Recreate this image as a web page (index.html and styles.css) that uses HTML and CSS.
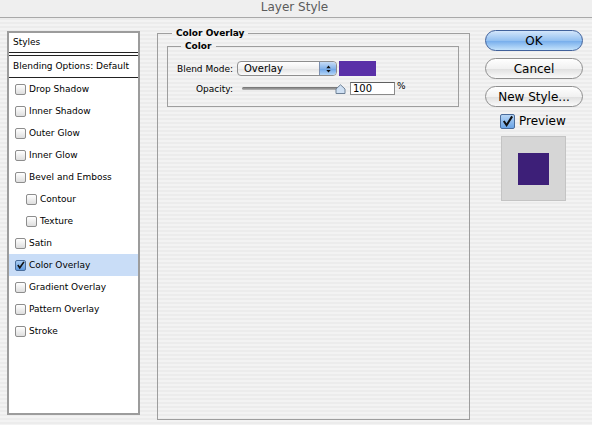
FILE: index.html
```html
<!DOCTYPE html>
<html lang="en">
<head>
    <meta charset="UTF-8">
    <title>Layer Style</title>
    <link rel="stylesheet" href="styles.css">
</head>
<body>
    <div class="window">
        <div class="titlebar">Layer Style</div>

        <div class="main">
            <div class="styles">
                <div class="styles-head">Styles</div>
                <div class="styles-blend">Blending Options: Default</div>
                <ul class="effects">
                    <li><span class="box"></span>Drop Shadow</li>
                    <li><span class="box"></span>Inner Shadow</li>
                    <li><span class="box"></span>Outer Glow</li>
                    <li><span class="box"></span>Inner Glow</li>
                    <li><span class="box"></span>Bevel and Emboss</li>
                    <li class="sub"><span class="box"></span>Contour</li>
                    <li class="sub"><span class="box"></span>Texture</li>
                    <li><span class="box"></span>Satin</li>
                    <li class="active"><span class="box checked"><svg viewBox="0 0 10 10"><path d="M2 4.5 L4.2 7.5 L8.8 1" fill="none" stroke="#111" stroke-width="1.8"/></svg></span>Color Overlay</li>
                    <li><span class="box"></span>Gradient Overlay</li>
                    <li><span class="box"></span>Pattern Overlay</li>
                    <li><span class="box"></span>Stroke</li>
                </ul>
            </div>

            <fieldset class="panel">
                <legend>Color Overlay</legend>
                <fieldset class="group">
                    <legend>Color</legend>
                    <div class="row">
                        <label>Blend Mode:</label>
                        <div class="select">
                            <span>Overlay</span>
                            <span class="arrows"><svg viewBox="0 0 8 10"><path d="M4 1 L6.5 4 L1.5 4 Z M4 9 L6.5 6 L1.5 6 Z" fill="#111"/></svg></span>
                        </div>
                        <span class="swatch"></span>
                    </div>
                    <div class="row">
                        <label>Opacity:</label>
                        <div class="slider">
                            <span class="track"></span>
                            <svg class="thumb" viewBox="0 0 11 10"><path d="M1 9.5 L1 5 L5.5 0.8 L10 5 L10 9.5 Z" fill="#cfe0f3" stroke="#6e8196"/></svg>
                        </div>
                        <span class="field">100</span>
                        <span class="unit">%</span>
                    </div>
                </fieldset>
            </fieldset>

            <div class="side">
                <button class="btn default">OK</button>
                <button class="btn">Cancel</button>
                <button class="btn">New Style...</button>
                <div class="preview-check">
                    <span class="bigbox"><svg viewBox="0 0 14 14"><path d="M3 6.5 L6 11 L12 1.5" fill="none" stroke="#111" stroke-width="2.2"/></svg></span>
                    Preview
                </div>
                <div class="preview">
                    <span class="preview-square"></span>
                </div>
            </div>
        </div>
    </div>
</body>
</html>
```

FILE: styles.css
```css
body {
    margin: 0;
    font-family: "DejaVu Sans", sans-serif;
    color: #000;
}
.window {
    width: 592px;
    height: 425px;
    overflow: hidden;
    background: repeating-linear-gradient(to bottom, #f3f3f3 0, #f3f3f3 2px, #ececec 2px, #ececec 4px);
}
.titlebar {
    height: 17px;
    line-height: 15px;
    border-bottom: 1px solid #a9a9a9;
    text-align: center;
    font-size: 12px;
    color: #5b5b5b;
    padding-right: 3px;
    background: #efefef;
}
.main {
    display: flex;
    align-items: flex-start;
    padding-left: 7px;
}

/* styles list */
.styles {
    margin-top: 13px;
    width: 133px;
    height: 384px;
    box-sizing: border-box;
    border: 2px solid #9c9c9c;
    background: #fff;
    font-size: 9px;
}
.styles-head {
    height: 19px;
    line-height: 19px;
    padding-left: 4px;
    border-bottom: 1px solid #222;
}
.styles-blend {
    margin-top: 2px;
    border-top: 1px solid #222;
    height: 21px;
    line-height: 20px;
    padding-left: 4px;
    border-bottom: 1px solid #222;
}
.effects {
    list-style: none;
    margin: 0;
    padding: 0;
}
.effects li {
    height: 22px;
    display: flex;
    align-items: center;
    padding-left: 6px;
}
.effects li.sub {
    padding-left: 17px;
}
.effects li.active {
    background: #c9ddf7;
}
.box {
    width: 9px;
    height: 9px;
    border: 1px solid #8d8d8d;
    border-radius: 2px;
    background: linear-gradient(#ffffff, #dedede);
    margin-right: 3px;
    display: flex;
}
.box.checked {
    background: linear-gradient(#a9cdf3, #5f9ae0);
    border-color: #4b6e9c;
}
.box svg {
    width: 9px;
    height: 9px;
}

/* middle panel */
.panel {
    margin: 9px 0 0 17px;
    width: 313px;
    height: 393px;
    box-sizing: border-box;
    border: 1px solid #9e9e9e;
    padding: 0 10px 0 9px;
    min-width: 0;
}
.panel legend,
.group legend {
    font-size: 9px;
    font-weight: bold;
    line-height: 13px;
    padding: 0 4px;
    margin-left: 5px;
}
.group {
    margin: 0;
    border: 1px solid #9e9e9e;
    padding: 8px 8px 11px 8px;
    min-width: 0;
}
.row {
    display: flex;
    align-items: center;
    font-size: 9px;
}
.row + .row {
    margin-top: 6px;
}
.row label {
    width: 57px;
    text-align: right;
    margin-right: 4px;
}
.select {
    width: 100px;
    height: 15px;
    box-sizing: border-box;
    border: 1px solid #8e8e8e;
    border-radius: 4px;
    background: linear-gradient(#ffffff, #f0f0f0 50%, #e2e2e2 51%, #fbfbfb);
    display: flex;
    align-items: center;
    justify-content: space-between;
    padding-left: 6px;
    font-size: 10px;
    overflow: hidden;
}
.arrows {
    width: 16px;
    height: 13px;
    border-left: 1px solid #7b8fb0;
    background: linear-gradient(#c7dcf6, #86b4ea 50%, #6aa2e6 51%, #b5d6f7);
    border-radius: 0 3px 3px 0;
    display: flex;
    align-items: center;
    justify-content: center;
}
.arrows svg {
    width: 7px;
    height: 10px;
}
.swatch {
    width: 37px;
    height: 15px;
    margin-left: 2px;
    background: #5a30a8;
}
.slider {
    position: relative;
    width: 104px;
    height: 13px;
    margin-left: 5px;
}
.track {
    position: absolute;
    left: 0;
    top: 5px;
    width: 98px;
    height: 3px;
    border-radius: 2px;
    background: linear-gradient(#6d6d6d, #b9b9b9);
}
.thumb {
    position: absolute;
    left: 93px;
    top: 2px;
    width: 11px;
    height: 10px;
}
.field {
    width: 45px;
    height: 13px;
    margin-left: 4px;
    box-sizing: border-box;
    border: 1px solid #8a8a8a;
    border-top-color: #5f5f5f;
    background: #fff;
    font-size: 10px;
    line-height: 12px;
    padding-left: 2px;
}
.unit {
    margin-left: 2px;
    font-size: 9px;
    align-self: flex-start;
    margin-top: -1px;
}

/* buttons column */
.side {
    margin: 12px 0 0 15px;
    width: 98px;
    display: flex;
    flex-direction: column;
}
.btn {
    height: 21px;
    width: 98px;
    border: 1px solid #8f8f8f;
    border-radius: 11px;
    background: linear-gradient(#ffffff, #f1f1f1 50%, #dfdfdf 51%, #fafafa);
    font-family: "DejaVu Sans", sans-serif;
    font-size: 12px;
    color: #000;
    padding: 0;
    margin-bottom: 7px;
}
.btn.default {
    border-color: #40619b;
    background: linear-gradient(#d3e6fb, #94c1f1 50%, #73abeb 51%, #c3e2fb);
}
.preview-check {
    display: flex;
    align-items: center;
    font-size: 12px;
    margin: 0 0 0 15px;
    height: 14px;
}
.bigbox {
    width: 13px;
    height: 13px;
    border: 1px solid #4a6c9b;
    border-radius: 2px;
    background: linear-gradient(#b6d5f5, #6aa4e6);
    margin-right: 4px;
    display: flex;
}
.bigbox svg {
    width: 13px;
    height: 13px;
}
.preview {
    margin: 8px 0 0 16px;
    width: 65px;
    height: 65px;
    box-sizing: border-box;
    border: 1px solid #c4c4c4;
    background: #d6d6d6;
    display: flex;
    align-items: center;
    justify-content: center;
}
.preview-square {
    width: 31px;
    height: 32px;
    background: #3d1f78;
}
```
